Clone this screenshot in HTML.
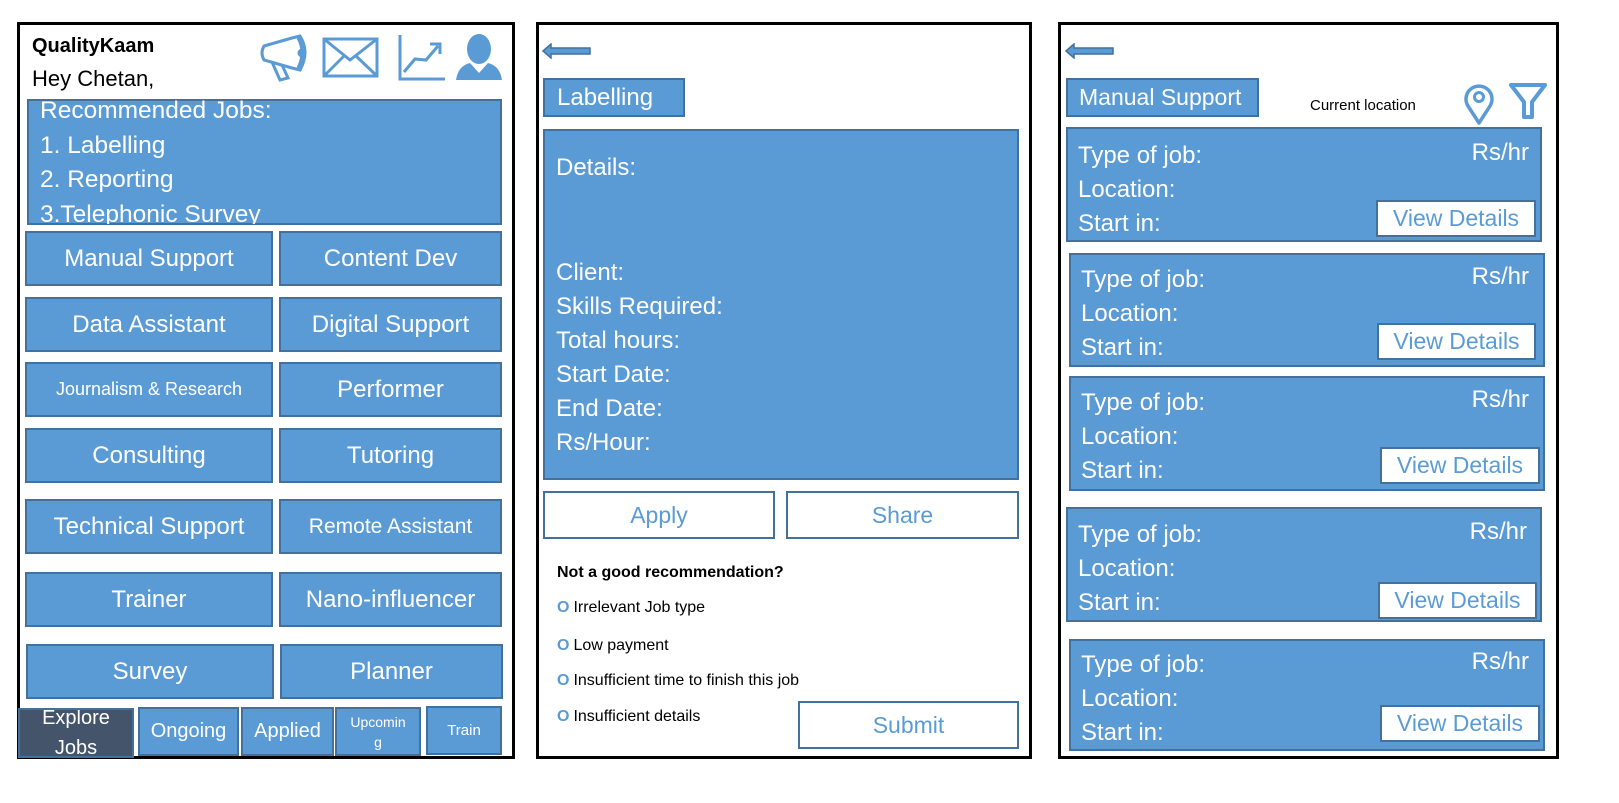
<!DOCTYPE html>
<html><head><meta charset="utf-8"><style>
*{margin:0;padding:0;box-sizing:border-box}
body{width:1619px;height:803px;background:#fff;position:relative;overflow:hidden;font-family:"Liberation Sans",sans-serif}
.p{position:absolute;border:3px solid #000}
.a{position:absolute}
.b{position:absolute;background:#5b9bd5;border:2px solid #41719c;color:#fff;display:flex;align-items:center;justify-content:center;font-size:24px;white-space:nowrap}
.w{position:absolute;background:#fff;border:2px solid #41719c;color:#5b9bd5;display:flex;align-items:center;justify-content:center;font-size:23px}
.t{position:absolute;color:#fff;font-size:24px;white-space:nowrap}
.rr{position:absolute;color:#fff;font-size:24px;white-space:nowrap;text-align:right}
.r{position:absolute;font-size:16px;color:#000;white-space:nowrap}
.r b{color:#5b9bd5;font-weight:bold;margin-right:4px}
</style></head><body>

<!-- Panel 1 -->
<div class="p" style="left:17px;top:22px;width:498px;height:737px"></div>
<div class="a" style="left:32px;top:35px;font-size:20px;font-weight:bold">QualityKaam</div>
<div class="a" style="left:32px;top:66px;font-size:22px">Hey Chetan,</div>
<svg class="a" style="left:258px;top:32px" width="250" height="52" viewBox="0 0 250 52">
 <g fill="none" stroke="#5b9bd5" stroke-width="3">
  <path d="M6 14 L34 6 L42 4 Q52 20 42 38 L34 36 L6 28 Q2 21 6 14Z"/>
  <path d="M40 6 Q48 20 40 36"/>
  <circle cx="44" cy="21" r="3"/>
  <path d="M14 30 L22 48 L30 46 L24 33"/>
  <rect x="66" y="7" width="53" height="37"/>
  <path d="M66 7 L92 28 L119 7 M66 44 L86 24 M119 44 L98 24"/>
  <path d="M142 3 V47 H187"/>
  <path d="M146 40 L157 27 L168 28 L180 14 M172 12 H182 V22"/>
 </g>
 <g fill="#5b9bd5">
  <ellipse cx="221" cy="17" rx="12" ry="15"/>
  <path d="M198 48 Q200 34 212 31 L221 41 L230 31 Q242 34 244 48Z"/>
 </g>
</svg>
<div class="b" style="left:27px;top:99px;width:475px;height:126px;display:block;overflow:hidden"></div>
<div class="t" style="left:40px;top:94px;font-size:24.5px;line-height:34.5px;height:130px;overflow:hidden">Recommended Jobs:<br>1. Labelling<br>2. Reporting<br>3.Telephonic Survey</div>
<div class="b" style="left:25px;top:231px;width:248px;height:55px">Manual Support</div>
<div class="b" style="left:279px;top:231px;width:223px;height:55px">Content Dev</div>
<div class="b" style="left:25px;top:297px;width:248px;height:55px">Data Assistant</div>
<div class="b" style="left:279px;top:297px;width:223px;height:55px">Digital Support</div>
<div class="b" style="left:25px;top:362px;width:248px;height:55px;font-size:18px">Journalism &amp; Research</div>
<div class="b" style="left:279px;top:362px;width:223px;height:55px">Performer</div>
<div class="b" style="left:25px;top:428px;width:248px;height:55px">Consulting</div>
<div class="b" style="left:279px;top:428px;width:223px;height:55px">Tutoring</div>
<div class="b" style="left:25px;top:499px;width:248px;height:55px">Technical Support</div>
<div class="b" style="left:279px;top:499px;width:223px;height:55px;font-size:21px">Remote Assistant</div>
<div class="b" style="left:25px;top:572px;width:248px;height:55px">Trainer</div>
<div class="b" style="left:279px;top:572px;width:223px;height:55px">Nano-influencer</div>
<div class="b" style="left:26px;top:644px;width:248px;height:55px">Survey</div>
<div class="b" style="left:280px;top:644px;width:223px;height:55px">Planner</div>
<div class="b" style="left:18px;top:708px;width:116px;height:50px;background:#44546a;font-size:20px;line-height:30px;text-align:center;overflow:hidden;flex-direction:column">Explore<br>Jobs</div>
<div class="b" style="left:138px;top:707px;width:101px;height:49px;font-size:20px">Ongoing</div>
<div class="b" style="left:241px;top:707px;width:93px;height:49px;font-size:20px">Applied</div>
<div class="b" style="left:335px;top:707px;width:86px;height:49px;font-size:14px;line-height:20px;text-align:center;flex-direction:column">Upcomin<br>g</div>
<div class="b" style="left:426px;top:706px;width:76px;height:49px;font-size:15px">Train</div>

<!-- Panel 2 -->
<div class="p" style="left:536px;top:22px;width:496px;height:737px"></div>
<svg class="a" style="left:542px;top:43px" width="50" height="16"><path d="M1 8 L9 1 V5 H48 V11 H9 V15Z" fill="#5b9bd5" stroke="#41719c" stroke-width="1.5"/></svg>
<div class="b" style="left:543px;top:78px;width:142px;height:39px;justify-content:flex-start;padding-left:12px">Labelling</div>
<div class="b" style="left:543px;top:129px;width:476px;height:351px"></div>
<div class="t" style="left:556px;top:154px">Details:</div>
<div class="t" style="left:556px;top:256px;line-height:34px">Client:<br>Skills Required:<br>Total hours:<br>Start Date:<br>End Date:<br>Rs/Hour:</div>
<div class="w" style="left:543px;top:491px;width:232px;height:48px">Apply</div>
<div class="w" style="left:786px;top:491px;width:233px;height:48px">Share</div>
<div class="r" style="left:557px;top:564px;font-weight:bold">Not a good recommendation?</div>
<div class="r" style="left:557px;top:599px"><b>O</b>Irrelevant Job type</div>
<div class="r" style="left:557px;top:637px"><b>O</b>Low payment</div>
<div class="r" style="left:557px;top:672px"><b>O</b>Insufficient time to finish this job</div>
<div class="r" style="left:557px;top:708px"><b>O</b>Insufficient details</div>
<div class="w" style="left:798px;top:701px;width:221px;height:48px">Submit</div>

<!-- Panel 3 -->
<div class="p" style="left:1058px;top:22px;width:501px;height:737px"></div>
<svg class="a" style="left:1065px;top:43px" width="50" height="16"><path d="M1 8 L9 1 V5 H48 V11 H9 V15Z" fill="#5b9bd5" stroke="#41719c" stroke-width="1.5"/></svg>
<div class="b" style="left:1066px;top:78px;width:193px;height:39px;justify-content:flex-start;padding-left:11px;font-size:23px">Manual Support</div>
<div class="r" style="left:1310px;top:97px;font-size:15px">Current location</div>
<svg class="a" style="left:1460px;top:82px" width="90" height="44">
 <path d="M19 41 L8 24 A13 13 0 1 1 30 24 Z" fill="none" stroke="#5b9bd5" stroke-width="3.5" stroke-linejoin="round"/>
 <circle cx="19" cy="15" r="4.5" fill="none" stroke="#5b9bd5" stroke-width="3"/>
 <path d="M51 3 H85 L72 20 V35 H64 V20 Z" fill="none" stroke="#5b9bd5" stroke-width="4" stroke-linejoin="round"/>
</svg>

<div class="b" style="left:1066px;top:127px;width:476px;height:115px"></div>
<div class="t" style="left:1078px;top:139px;line-height:34px">Type of job:<br>Location:<br>Start in:</div>
<div class="rr" style="right:90px;top:139px">Rs/hr</div>
<div class="w" style="left:1376px;top:200px;width:160px;height:37px">View Details</div>

<div class="b" style="left:1069px;top:253px;width:476px;height:114px"></div>
<div class="t" style="left:1081px;top:263px;line-height:34px">Type of job:<br>Location:<br>Start in:</div>
<div class="rr" style="right:90px;top:263px">Rs/hr</div>
<div class="w" style="left:1377px;top:323px;width:159px;height:37px">View Details</div>

<div class="b" style="left:1069px;top:376px;width:476px;height:115px"></div>
<div class="t" style="left:1081px;top:386px;line-height:34px">Type of job:<br>Location:<br>Start in:</div>
<div class="rr" style="right:90px;top:386px">Rs/hr</div>
<div class="w" style="left:1380px;top:447px;width:160px;height:37px">View Details</div>

<div class="b" style="left:1066px;top:507px;width:476px;height:115px"></div>
<div class="t" style="left:1078px;top:518px;line-height:34px">Type of job:<br>Location:<br>Start in:</div>
<div class="rr" style="right:92px;top:518px">Rs/hr</div>
<div class="w" style="left:1378px;top:582px;width:159px;height:37px">View Details</div>

<div class="b" style="left:1069px;top:639px;width:476px;height:112px"></div>
<div class="t" style="left:1081px;top:648px;line-height:34px">Type of job:<br>Location:<br>Start in:</div>
<div class="rr" style="right:90px;top:648px">Rs/hr</div>
<div class="w" style="left:1380px;top:705px;width:160px;height:37px">View Details</div>
</body></html>
